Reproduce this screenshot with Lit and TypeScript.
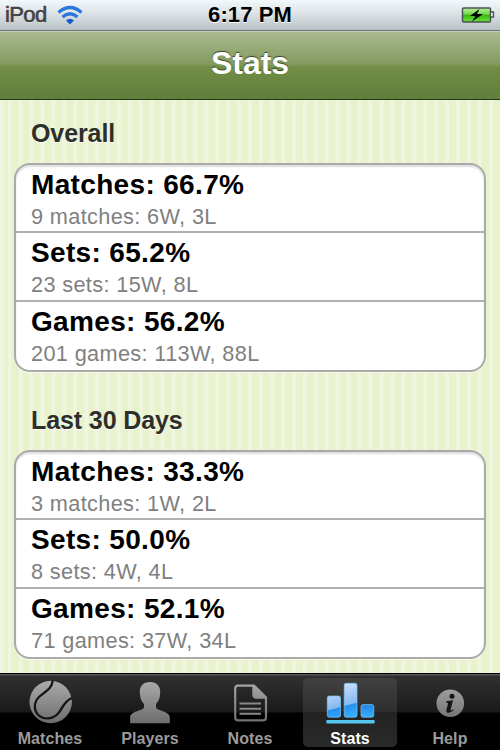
import { LitElement, html, css, svg } from "lit";
import { customElement } from "lit/decorators.js";

type Row = { title: string; detail: string };
type Section = { name: string; rows: Row[] };

const sections: Section[] = [
  {
    name: "Overall",
    rows: [
      { title: "Matches: 66.7%", detail: "9 matches: 6W, 3L" },
      { title: "Sets: 65.2%", detail: "23 sets: 15W, 8L" },
      { title: "Games: 56.2%", detail: "201 games: 113W, 88L" },
    ],
  },
  {
    name: "Last 30 Days",
    rows: [
      { title: "Matches: 33.3%", detail: "3 matches: 1W, 2L" },
      { title: "Sets: 50.0%", detail: "8 sets: 4W, 4L" },
      { title: "Games: 52.1%", detail: "71 games: 37W, 34L" },
    ],
  },
];

@customElement("stats-group")
class StatsGroup extends LitElement {
  static properties = { section: { attribute: false } };
  declare section: Section;

  static styles = css`
    :host { display: block; height: 287px; }
    .name {
      height: 63px; padding-left: 31px; box-sizing: border-box;
      font-size: 25px; line-height: 66px; font-weight: bold; color: #2d2f29;
      letter-spacing: -0.1px; text-shadow: 0 1px 0 #fff;
    }
    .card {
      margin: 0 14px; height: 209px; box-sizing: border-box;
      border: 2px solid #aaa; border-radius: 16px; background: #fff;
      box-shadow: inset 0 2px 2px #ddd, 0 1px 0 #f8fbe9;
      display: flex; flex-direction: column;
    }
    .row { height: 69px; box-sizing: border-box; padding: 4px 0 0 15px; border-bottom: 2px solid #b0b0b0; }
    .row:first-child { height: 68px; }
    .row:last-child { border-bottom: 0; }
    .title { font-size: 28px; line-height: 32px; font-weight: bold; color: #000; white-space: nowrap; letter-spacing: .34px; }
    .detail { font-size: 21.7px; line-height: 31px; color: #808080; white-space: nowrap; letter-spacing: .36px; }
  `;

  render() {
    return html`
      <div class="name">${this.section.name}</div>
      <div class="card">
        ${this.section.rows.map(
          (r) => html`<div class="row"><div class="title">${r.title}</div><div class="detail">${r.detail}</div></div>`
        )}
      </div>
    `;
  }
}

const ball = svg`
  <circle cx="50.700" cy="28" r="21.200" fill="url(#g)"/>
  <path d="M52.700 6.500C52 15 45 17.500 39.500 22.500C33.500 28 33.500 36 38.300 41C43.500 46 53 45.500 58.300 39.300C62.500 34.500 64 27 72 24" fill="none" stroke="#141414" stroke-width="2.300"/>`;
const person = svg`
  <path d="M50 8C57 8 60.700 12.500 60.200 19C60 24 58.500 27.500 56 30V33.500C57.500 37 69.800 37 69.800 43.500V49.300H30.200V43.500C30.200 37 42.500 37 44 33.500V30C41.500 27.500 40 24 39.800 19C39.300 12.500 43 8 50 8z" fill="url(#g)"/>`;
const note = svg`
  <path d="M38 11.700H54L66 23.500V43.500Q66 46.300 63.200 46.300H38Q35.200 46.300 35.200 43.500V14.500Q35.200 11.700 38 11.700z" fill="none" stroke="url(#g)" stroke-width="2.200"/>
  <path d="M52.300 11V20.500Q52.300 24.700 56.500 24.700H66.500V23L54.500 11z" fill="url(#g)"/>
  <path d="M39.500 29.500h21.500M39.500 34.700h21.500M39.500 39.800h21.500" stroke="#8a8a8a" stroke-width="1.900"/>`;
const bars = svg`
  <g stroke="#78c8fb" stroke-width=".7">
    <rect x="27.300" y="22" width="13.200" height="21.200" rx="2" fill="url(#b)"/>
    <rect x="44.200" y="9.300" width="12.800" height="33.900" rx="2" fill="url(#b)"/>
    <rect x="61" y="30.600" width="12.800" height="12.600" rx="2" fill="url(#c)"/>
  </g>
  <rect x="26.300" y="46" width="48.400" height="3.500" rx="1" fill="#55c8f2"/>`;
const info = svg`
  <circle cx="50.300" cy="29.300" r="13.800" fill="url(#g)"/>
  <circle cx="52" cy="22.300" r="2.500" fill="#151515"/>
  <path d="M46.300 27.300L53 26.300L50.600 35.600Q50.400 37 51.500 36.400L53 35.200L53.700 36.100Q50.500 39.200 48 38.800Q45.600 38.200 46.500 35.200L48 29.900Q48.200 28.700 47.200 28.700H46.300z" fill="#151515"/>`;

@customElement("tab-item")
class TabItem extends LitElement {
  static properties = { label: {}, icon: { attribute: false }, active: { type: Boolean } };
  declare label: string;
  declare icon: unknown;
  declare active: boolean;

  static styles = css`
    :host { display: block; width: 100px; height: 75px; padding: 4px 3px 3px; box-sizing: border-box; }
    .tab { height: 69px; border-radius: 5px; text-align: center; color: #9b9b9b; }
    .active { background: linear-gradient(#414141, #2e2e2e 49%, #232323 50%, #292929); color: #fff; }
    svg { display: block; width: 100px; height: 52px; margin: 0 -3px; }
    .label { font-size: 16px; line-height: 18px; font-weight: bold; letter-spacing: .1px; }
  `;

  render() {
    return html`<div class="tab ${this.active ? "active" : ""}">
      <svg viewBox="0 4 100 52">
        <defs>
          <linearGradient id="g" gradientUnits="userSpaceOnUse" x1="0" y1="7" x2="0" y2="50">
            <stop offset="0" stop-color="#aaa"/><stop offset="1" stop-color="#6c6c6c"/>
          </linearGradient>
          <linearGradient id="b" gradientUnits="userSpaceOnUse" x1="40" y1="9" x2="49" y2="43">
            <stop offset="0" stop-color="#d2e0fa"/><stop offset=".65" stop-color="#86b9f3"/>
            <stop offset=".68" stop-color="#2590f2"/><stop offset="1" stop-color="#35aefb"/>
          </linearGradient>
          <linearGradient id="c" x2="0" y2="1">
            <stop stop-color="#2585e6"/><stop offset="1" stop-color="#35aefb"/>
          </linearGradient>
        </defs>
        ${this.icon}
      </svg>
      <div class="label">${this.label}</div>
    </div>`;
  }
}

@customElement("app-root")
class AppRoot extends LitElement {
  static styles = css`
    :host {
      display: flex; flex-direction: column; width: 500px; height: 750px; overflow: hidden;
      font-family: "Liberation Sans", Arial, sans-serif; background: #000;
    }
    .status {
      height: 31px; box-sizing: border-box; border-bottom: 1px solid #6d7376;
      display: grid; grid-template-columns: 1fr auto 1fr; align-items: center;
      padding: 0 5px; background: linear-gradient(#f2f8fb, #dce3e7 45%, #b9c1c6);
      text-shadow: 0 1px 0 #fff; font-size: 22px; line-height: 30px;
    }
    .carrier { display: flex; align-items: center; color: #444; -webkit-text-stroke: .7px #444; letter-spacing: -.6px; }
    .wifi { width: 26px; height: 20px; margin-left: 10px; }
    .time { font-weight: bold; color: #000; letter-spacing: .1px; }
    .battery { justify-self: end; width: 34px; height: 18px; }
    .nav {
      height: 69px; box-sizing: border-box; border-top: 1px solid #c5d0b4; border-bottom: 1px solid #26351a;
      background: linear-gradient(#abba90, #839a5e 48%, #718d46 53%, #5f7f3b);
      color: #fff; font-size: 32px; line-height: 63px; font-weight: bold; text-align: center;
      text-shadow: 0 -1px 1px #34421f;
    }
    .content {
      height: 573px; overflow: hidden; background-color: #e8f2cd;
      background-image: repeating-linear-gradient(90deg, #eff5de 0 3px, transparent 4px 10px, #eff5de 10.940px);
      background-position: 8px 0;
    }
    .tabs {
      height: 77px; box-sizing: border-box; border-top: 1px solid #000; display: flex;
      background: linear-gradient(#555 0 1px, #303030 2px, #1a1a1a 38px, #000 39px);
    }
  `;

  render() {
    return html`
      <div class="status">
        <div class="carrier"><span>iPod</span>
          <svg class="wifi" viewBox="0 0 26 20">
            <g fill="none" stroke="#2a78de" stroke-width="3.300">
              <path d="M1.500 7.500Q13-2.500 24.500 7.500"/><path d="M5.500 12Q13 5.500 20.500 12"/>
            </g>
            <path d="M9 15.500q4-3.500 8 0l-4 4z" fill="#1659cc"/>
          </svg>
        </div>
        <div class="time">6:17 PM</div>
        <svg class="battery" viewBox="0 0 34 18">
          <defs><linearGradient id="bat" x2="0" y2="1"><stop stop-color="#b8ee9b"/><stop offset=".45" stop-color="#71d64b"/><stop offset=".5" stop-color="#35b613"/><stop offset="1" stop-color="#6be23a"/></linearGradient></defs>
          <rect x="1.500" y="2" width="28" height="14" rx="1" fill="url(#bat)" stroke="#4b5350" stroke-width="1.500"/>
          <path d="M30 6h2.500v5H30" fill="#dfe5e7" stroke="#4b5350" stroke-width="1.300"/>
          <path d="M18.500 3L9 10h5.500L11 15.500l11-7.500h-6z" fill="#000"/>
        </svg>
      </div>
      <div class="nav">Stats</div>
      <div class="content">
        ${sections.map((s) => html`<stats-group .section=${s}></stats-group>`)}
      </div>
      <div class="tabs">
        <tab-item label="Matches" .icon=${ball}></tab-item>
        <tab-item label="Players" .icon=${person}></tab-item>
        <tab-item label="Notes" .icon=${note}></tab-item>
        <tab-item label="Stats" .icon=${bars} active></tab-item>
        <tab-item label="Help" .icon=${info}></tab-item>
      </div>
    `;
  }
}
